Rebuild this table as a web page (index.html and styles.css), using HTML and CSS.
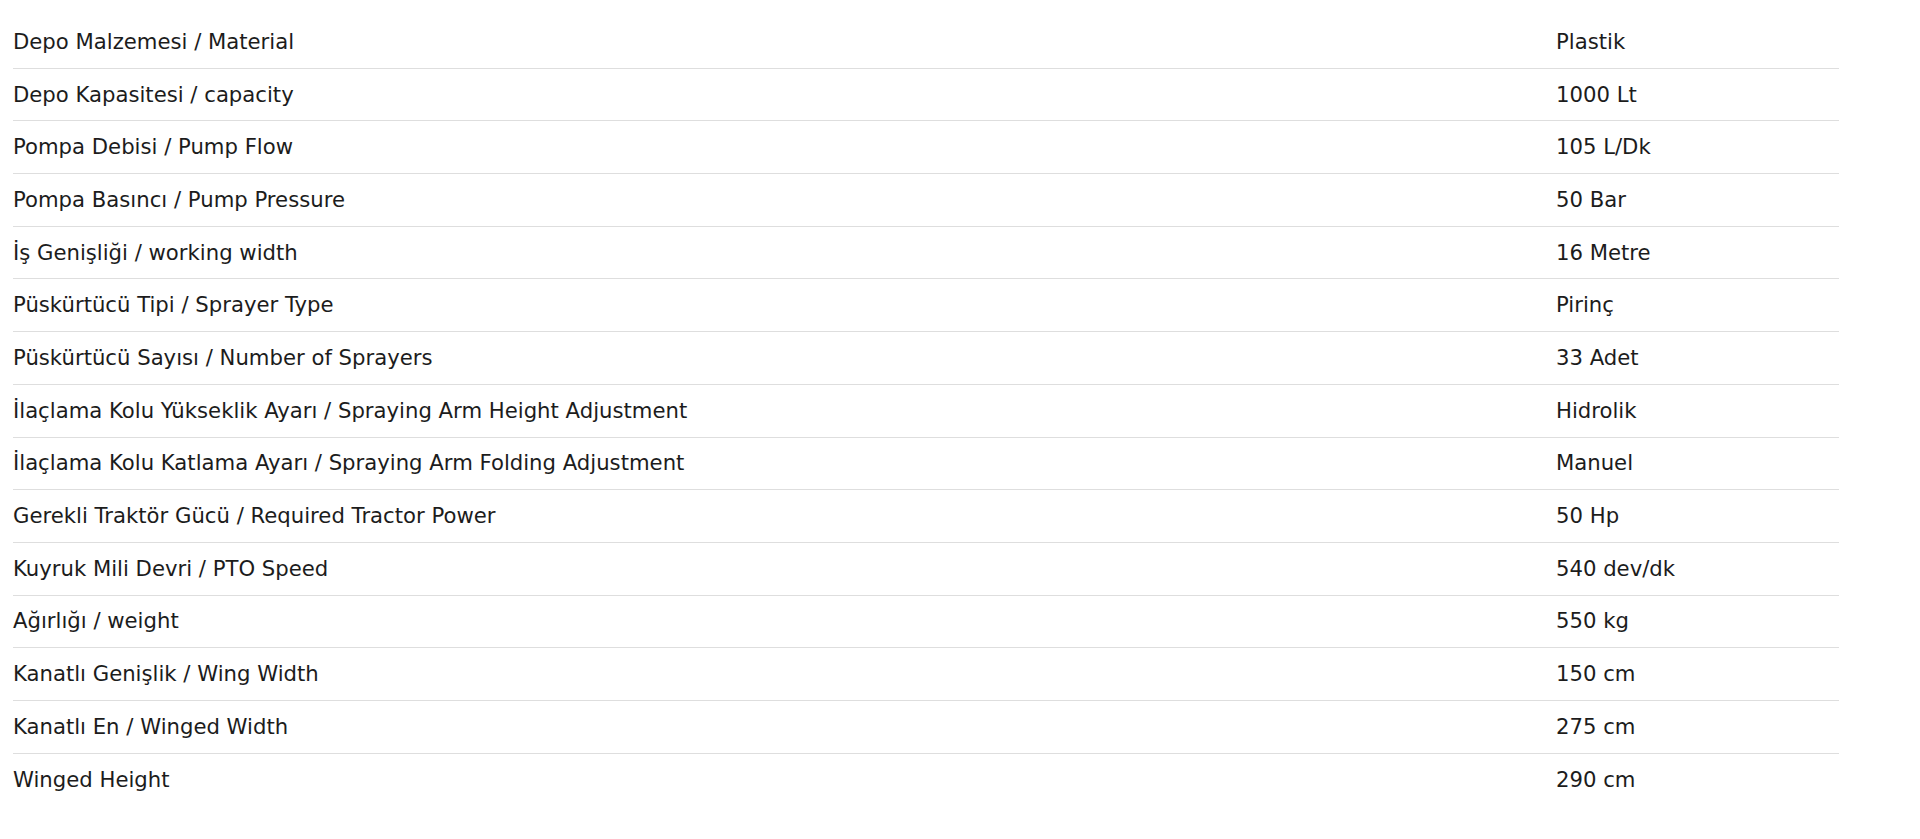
FILE: index.html
```html
<!DOCTYPE html>
<html lang="tr">
<head>
<meta charset="utf-8">
<title>Teknik Özellikler</title>
<link rel="stylesheet" href="styles.css">
</head>
<body>
<div class="specs">
  <div class="row"><span class="label">Depo Malzemesi / Material</span><span class="value">Plastik</span></div>
  <div class="row"><span class="label">Depo Kapasitesi / capacity</span><span class="value">1000 Lt</span></div>
  <div class="row"><span class="label">Pompa Debisi / Pump Flow</span><span class="value">105 L/Dk</span></div>
  <div class="row"><span class="label">Pompa Basıncı / Pump Pressure</span><span class="value">50 Bar</span></div>
  <div class="row"><span class="label">İş Genişliği / working width</span><span class="value">16 Metre</span></div>
  <div class="row"><span class="label">Püskürtücü Tipi / Sprayer Type</span><span class="value">Pirinç</span></div>
  <div class="row"><span class="label">Püskürtücü Sayısı / Number of Sprayers</span><span class="value">33 Adet</span></div>
  <div class="row"><span class="label">İlaçlama Kolu Yükseklik Ayarı / Spraying Arm Height Adjustment</span><span class="value">Hidrolik</span></div>
  <div class="row"><span class="label">İlaçlama Kolu Katlama Ayarı / Spraying Arm Folding Adjustment</span><span class="value">Manuel</span></div>
  <div class="row"><span class="label">Gerekli Traktör Gücü / Required Tractor Power</span><span class="value">50 Hp</span></div>
  <div class="row"><span class="label">Kuyruk Mili Devri / PTO Speed</span><span class="value">540 dev/dk</span></div>
  <div class="row"><span class="label">Ağırlığı / weight</span><span class="value">550 kg</span></div>
  <div class="row"><span class="label">Kanatlı Genişlik / Wing Width</span><span class="value">150 cm</span></div>
  <div class="row"><span class="label">Kanatlı En / Winged Width</span><span class="value">275 cm</span></div>
  <div class="row"><span class="label">Winged Height</span><span class="value">290 cm</span></div>
</div>
</body>
</html>
```

FILE: styles.css
```css
html, body {
  margin: 0;
  padding: 0;
  background: #ffffff;
}

body {
  font-family: "DejaVu Sans", "Liberation Sans", sans-serif;
  color: #1c1c1c;
}

.specs {
  width: 1826px;
  padding: 16px 0 0 13px;
}

.row {
  display: grid;
  grid-template-columns: 1543px 1fr;
  align-items: center;
  height: 52.7px;
  box-sizing: border-box;
  border-bottom: 1px solid #dedede;
  font-size: 21.2px;
  padding-bottom: 1px;
}

.row:last-child {
  border-bottom: none;
}
```
